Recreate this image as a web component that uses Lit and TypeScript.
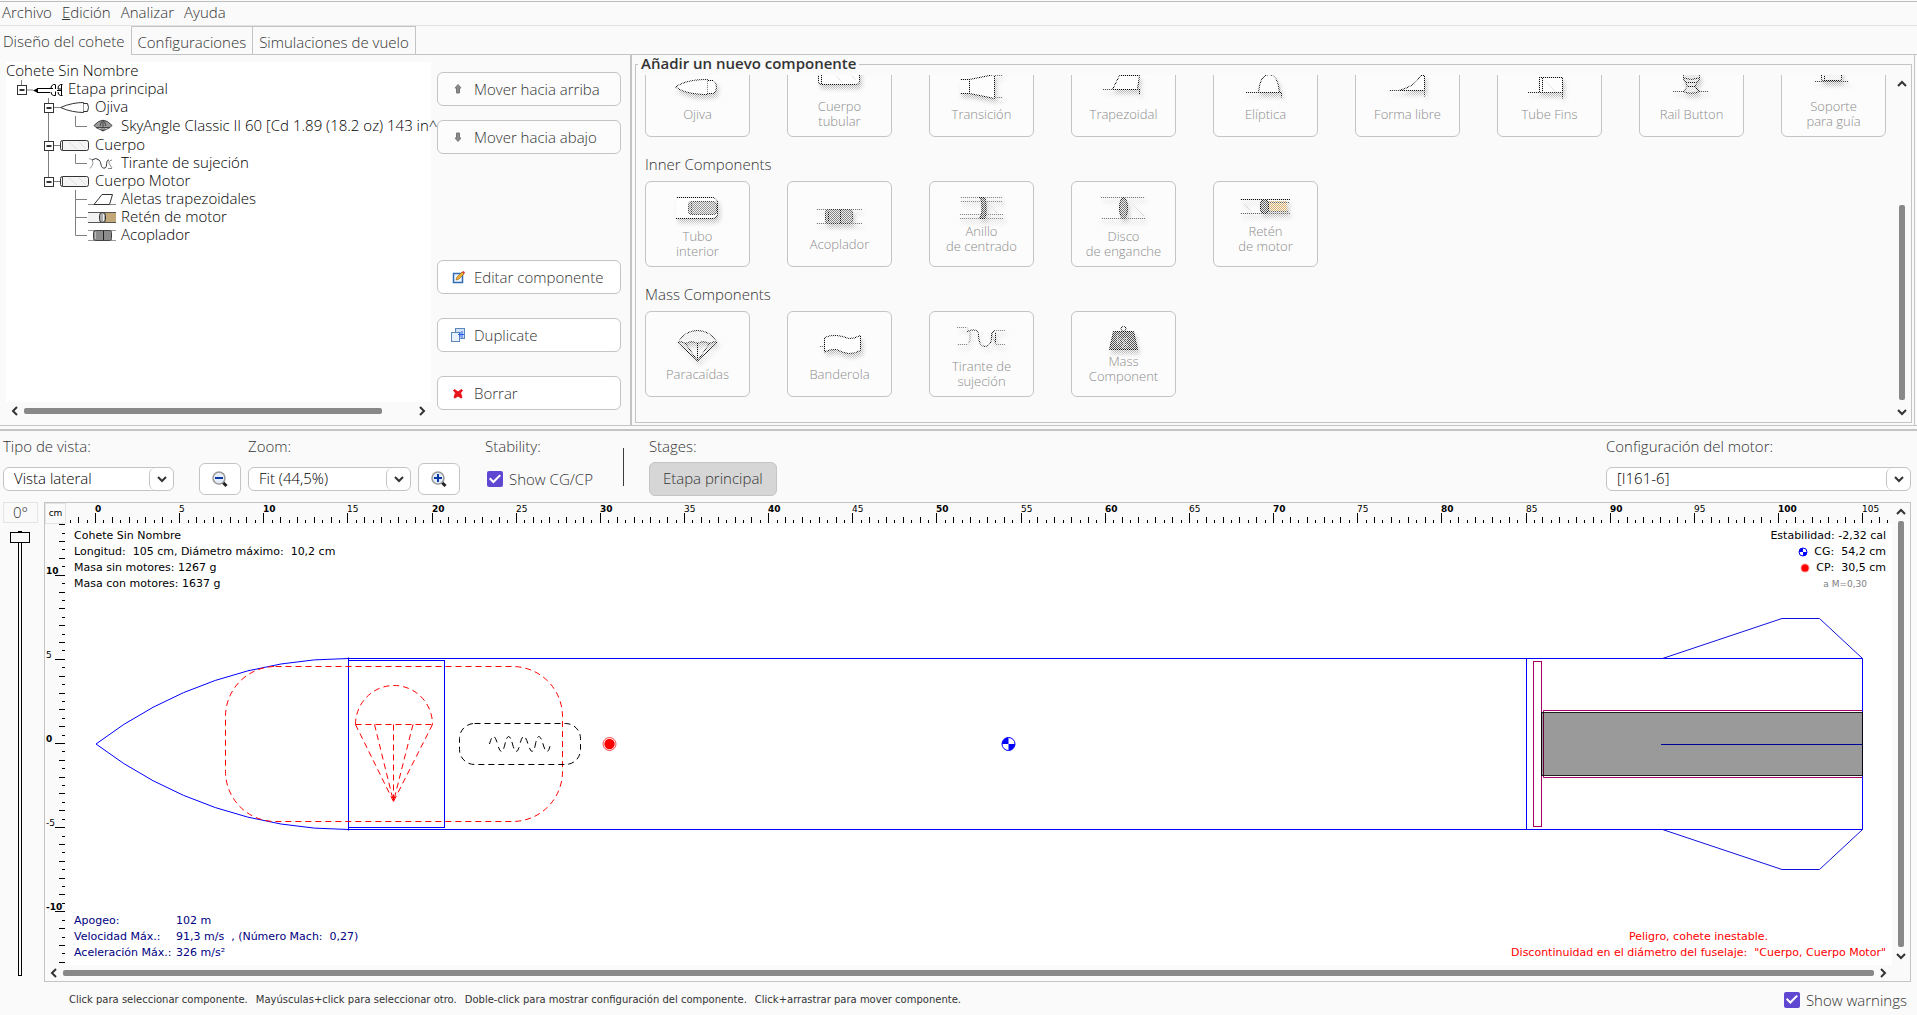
import { LitElement, html, svg, css, nothing, TemplateResult, SVGTemplateResult } from "lit";
import { customElement } from "lit/decorators.js";

type Shape = SVGTemplateResult;

interface TreeRow {
  label: string;
  depth: number;
  guides: string;
  box?: boolean;
  icon?: Shape;
  iconWidth?: number;
  tall?: boolean;
}

interface Part {
  lines: string[];
  icon: Shape;
  size: "one" | "two" | "mid";
}

const K = "#111";

/* ---------- tree icons ---------- */

const tubeSmall = svg`
  <rect x=".5" y="4.5" width="28" height="10" rx="2" fill="#f4f4f4" stroke="#333"/>
  <path d="M2.500 5v9" stroke="#444"/><path d="M9 6l8 7M19 6l7 7" stroke="#ddd"/>`;

const noseSmall = svg`
  <path d="M.5 9.5C8 6 17 4.500 23.500 4.500V14.500C17 14.500 8 13 .5 9.500Z" fill="#fff" stroke="#333"/>
  <path d="M23.500 5.500h4q2 4 0 8h-4" fill="#fff" stroke="#333"/>`;

const rocketSmall = svg`
  <path d="M0 10.500l4-2h1v4h-1z" fill="#000"/>
  <path d="M4 8.500h16M4 12.500h13" stroke="#000"/>
  <path d="M22.500 4.500h-2q-3 1-2.500 4M18 12q0 3 2.500 3.500h2M22.500 5v4M22.500 11.500v4M29.500 4.500h-2q-3 1-2.500 4.500h3M25 12q0 3 2.500 3.500h2M28.500 5v10M24 10.500h5" fill="none" stroke="#000"/>`;

const chuteSmall = svg`
  <path d="M1 9.500Q10 -1 19 9.500L17 11.500H3Z" fill="#999" stroke="#444"/>
  <path d="M7 10Q10 -1 13 10M3 11.500L10 15L17 11.500M7 11l3 4l3-4M10 4v11" fill="none" stroke="#444"/>`;

const cordSmall = svg`
  <path d="M1 4.500q4 0 4 4q0 3-3 6" fill="none" stroke="#999"/>
  <path d="M4 6q4-3 7 0c3 3 1 9 6 8c3-1 0-8 4-8" fill="none" stroke="#333"/>
  <path d="M20 14.500h4M24 6q-5 1-2 5q2 3 2 3" fill="none" stroke="#888"/>`;

const finSmall = svg`
  <path d="M0 14.500h28" stroke="#888"/><path d="M6 14.500L14 4.500H24.500L21.500 14.500Z" fill="#fff" stroke="#333"/>`;

const blockSmall = svg`
  <rect x="0" y="5" width="28" height="10" fill="#f2f2f2"/>
  <rect x="16" y="5" width="12" height="10" fill="#c2a878"/>
  <path d="M0 4.500h28M0 14.500h28" stroke="#555"/>
  <rect x="11.500" y="4.500" width="6" height="10" rx="3" fill="#aaa" stroke="#333"/><path d="M15.500 6v7" stroke="#eee"/>`;

const couplerSmall = svg`
  <path d="M0 4.500h28M0 14.500h28" stroke="#999"/>
  <rect x="5.500" y="4.500" width="18" height="10" rx="2" fill="#8b8b8b" stroke="#444"/>
  <path d="M15.500 5v9" stroke="#222"/><path d="M7.500 6v7" stroke="#bbb"/>`;

const TREE: TreeRow[] = [
  { label: "Etapa principal", depth: 1, guides: "M15.500 0V5M21 10H27", box: true, icon: rocketSmall, iconWidth: 30 },
  { label: "Ojiva", depth: 2, guides: "M42.500 0V5M42.500 15V18M48 9.500H54", box: true, icon: noseSmall, iconWidth: 30 },
  { label: "SkyAngle Classic II 60 [Cd 1.89 (18.2 oz) 143 in^", depth: 3, guides: "M42.500 0V20M69.500 0V10.500H81", icon: chuteSmall, iconWidth: 20, tall: true },
  { label: "Cuerpo", depth: 2, guides: "M42.500 0V5M42.500 15V18M48 9.500H54", box: true, icon: tubeSmall, iconWidth: 30 },
  { label: "Tirante de sujeción", depth: 3, guides: "M42.500 0V18M69.500 0V9.500H81", icon: cordSmall, iconWidth: 28 },
  { label: "Cuerpo Motor", depth: 2, guides: "M42.500 0V5M48 9.500H54", box: true, icon: tubeSmall, iconWidth: 30 },
  { label: "Aletas trapezoidales", depth: 3, guides: "M69.500 0V18M69.500 9.500H81", icon: finSmall, iconWidth: 28 },
  { label: "Retén de motor", depth: 3, guides: "M69.500 0V18M69.500 9.500H81", icon: blockSmall, iconWidth: 28 },
  { label: "Acoplador", depth: 3, guides: "M69.500 0V9.500H81", icon: couplerSmall, iconWidth: 28 },
];

/* ---------- component palette ---------- */

const OUTER: Part[] = [
  { lines: ["Ojiva"], size: "one", icon: svg`
    <path d="M29.500 35C38 29 50 27.500 61.500 27.500V42.500C50 42.500 38 41 29.500 35Z" fill="#fff"/>
    <path d="M61.500 28.500h6q3 2 3 6.500t-3 6.500h-6" fill="#fff"/>` },
  { lines: ["Cuerpo", "tubular"], size: "two", icon: svg`
    <rect x="30.500" y="14.500" width="41" height="18" rx="3" fill="#fff"/><path d="M33.500 15v17"/><path d="M42 15l12 16M58 15l10 14" stroke="#ddd"/>` },
  { lines: ["Transición"], size: "one", icon: svg`
    <path d="M30 27.500H39.500L64.500 22.500V46.500L39.500 41.500H30" fill="#fff"/><path d="M39.500 27v15"/><path d="M64 23.500h9M64 45.500h9" stroke="#777"/>` },
  { lines: ["Trapezoidal"], size: "one", icon: svg`
    <path d="M31 37.500h36" stroke="#555"/><path d="M40.500 37.500L47.500 23.500H67.500L65.500 37.500Z" fill="#fff"/><path d="M67.500 37v6"/>` },
  { lines: ["Elíptica"], size: "one", icon: svg`
    <path d="M32 40.500h35.500v5" stroke="#222"/><path d="M44.500 40.500Q46 22.500 55 22.500T65.500 40.500Z" fill="#fff"/>` },
  { lines: ["Forma libre"], size: "one", icon: svg`
    <path d="M33 38.500h35.500v6" stroke="#444"/><path d="M43 38.500Q60 34 64.500 23.500H68.500V38.500Z" fill="#fff"/>` },
  { lines: ["Tube Fins"], size: "one", icon: svg`
    <rect x="41.500" y="25.500" width="23" height="15" fill="#fff"/><path d="M44.500 26v14"/><path d="M47 28l11 12" stroke="#ddd"/><path d="M30 40.500h34.500v6" stroke="#222"/>` },
  { lines: ["Rail Button"], size: "one", icon: svg`
    <path d="M33 39.500h36" stroke="#555"/>
    <path d="M45.500 30Q47 32 47 34.500Q46 37 43 39.500Q51 43 59.500 39.500Q56 37 55.500 34.500Q55.500 32 57.500 30Z" fill="#ddd"/>
    <rect x="43.500" y="20.500" width="16" height="10" rx="4" fill="#ddd"/><path d="M44 26q7 3 15 0M47 34.500h8.500"/>` },
  { lines: ["Soporte", "para guía"], size: "two", icon: svg`
    <path d="M33 29.500h34" stroke="#444"/><rect x="39.500" y="18.500" width="20" height="10" rx="2" fill="#eee"/><path d="M42.500 19v9"/>` },
];

const INNER: Part[] = [
  { lines: ["Tubo", "interior"], size: "two", icon: svg`
    <path d="M30 15.500H67q4.500 1 4.500 5V32q0 4-4.500 4.500H30" fill="#fff"/>
    <rect x="42.500" y="19.500" width="28" height="13" rx="3" fill="#999" stroke="#444"/><path d="M45.500 20v12" stroke="#444"/>` },
  { lines: ["Acoplador"], size: "one", icon: svg`
    <path d="M28 27.500h46M28 41.500h46" stroke="#777"/>
    <rect x="37.500" y="27.500" width="27" height="14" rx="3" fill="#888" stroke="#333"/><path d="M52.500 27v15M40.500 29v11"/>` },
  { lines: ["Anillo", "de centrado"], size: "mid", icon: svg`
    <path d="M30 15.500h43M30 19.500h43M30 32.500h43M30 36.500h43" stroke="#888"/>
    <path d="M49 15.500h5.500q1.500 2 1.500 10.500t-1.500 10.500h-5.500q3-1 3-10.500t-3-10.500z" fill="#666"/><path d="M58 20l9 11" stroke="#ccc"/>` },
  { lines: ["Disco", "de enganche"], size: "two", icon: svg`
    <path d="M29 15.500h44M29 36.500h44" stroke="#777"/><ellipse cx="51.500" cy="26" rx="4" ry="10.500" fill="#777"/><path d="M58 19l14 15" stroke="#ccc"/>` },
  { lines: ["Retén", "de motor"], size: "mid", icon: svg`
    <rect x="50" y="19" width="23" height="11" fill="#d8b070" stroke="none"/>
    <path d="M26 17.500h50" /><path d="M52 20.500h23M52 29.500h23M26 31.500h50" stroke="#666"/><path d="M29 20l8 10" stroke="#ccc"/>
    <rect x="46.500" y="17.500" width="8" height="14" rx="4" fill="#666"/>` },
];

const MASS: Part[] = [
  { lines: ["Paracaídas"], size: "one", icon: svg`
    <path d="M32 30.500Q39 18.500 51.500 18.500T71 30.500Q68 28.500 63.500 31.500Q57 28 51.500 31.500Q46 28 39.500 31.500Q35 28.500 32 30.500Z" fill="#eee"/>
    <path d="M32 30.500L51.500 49L71 30.500M39.500 31.500L51.500 49L63.500 31.500M51.500 31V49" fill="none"/>` },
  { lines: ["Banderola"], size: "one", icon: svg`
    <path d="M36.500 25.500Q42 23 48.500 23.500T60.500 26.500Q66 27 72.500 23.500V38.500Q66 42 60.500 41.500T48.500 37.500Q42 37 36.500 40Z" fill="#fff"/><path d="M31 34.500h5" stroke="#777"/>` },
  { lines: ["Tirante de", "sujeción"], size: "two", icon: svg`
    <path d="M27 15.500h10l3 5v8l-2 4H27" fill="none" stroke="#888"/><path d="M75 18.500H64q-3 3-1 7l3 7h9" fill="none" stroke="#888"/>
    <path d="M37 20Q40 17.500 43.500 18Q49 18 48.500 24Q49 34.500 55 34.500Q62 34 61.500 24Q61 20 65 19M65.500 20v11" fill="none"/>` },
  { lines: ["Mass", "Component"], size: "mid", icon: svg`
    <circle cx="51.500" cy="17" r="2.500" fill="none"/><path d="M41.500 19.500H61.500L65.500 37.500H37.500Z" fill="#555"/>
    <text x="44" y="33" font-size="12" fill="#ccc" stroke="none">kg</text>` },
];

/* ---------- scrollbar ---------- */

@customElement("scroll-bar")
export class ScrollBar extends LitElement {
  static properties = {
    vertical: { type: Boolean, reflect: true },
    start: { type: Number },
    span: { type: Number },
  };
  declare vertical: boolean;
  declare start: number;
  declare span: number;

  constructor() {
    super();
    this.vertical = false;
    this.start = 0;
    this.span = 100;
  }

  static styles = css`
    :host { display: flex; align-items: center; height: 18px; }
    :host([vertical]) { flex-direction: column; width: 18px; height: auto; }
    button { flex: none; display: grid; place-items: center; width: 18px; height: 18px; padding: 0; border: 0; background: none; }
    .track { flex: 1; display: flex; width: 100%; height: 6px; }
    :host([vertical]) .track { flex-direction: column; width: 6px; height: auto; }
    .thumb { background: #888; border-radius: 2px; }
    path { fill: none; stroke: #333; stroke-width: 2; }
  `;

  render() {
    const size = (v: number) => (this.vertical ? `height:${v}%` : `width:${v}%`);
    return html`
      <button aria-label="Anterior"><svg width="12" height="12"><path d=${this.vertical ? "M2 8l4-4l4 4" : "M8 2l-4 4l4 4"}></path></svg></button>
      <div class="track"><div style=${size(this.start)}></div><div class="thumb" style=${size(this.span)}></div></div>
      <button aria-label="Siguiente"><svg width="12" height="12"><path d=${this.vertical ? "M2 4l4 4l4-4" : "M4 2l4 4l-4 4"}></path></svg></button>
    `;
  }
}

/* ---------- application ---------- */

const CM = 16.83;

@customElement("app-root")
export class AppRoot extends LitElement {
  static styles = css`
    * { box-sizing: border-box; }
    :host {
      display: flex; flex-direction: column; min-height: 100vh;
      background: #fafafa; color: #333;
      font: 300 15px/18px "Open Sans", "Noto Sans", sans-serif;
      --line: #c4c4c4;
    }
    button, select, input { font: inherit; color: inherit; margin: 0; }
    .defs { position: absolute; }
    .menu { display: flex; gap: 10px; height: 25px; margin-top: 1px; padding: 0 2px 4px; align-items: center; border-top: 1px solid #bdbdbd; border-bottom: 1px solid #e2e2e2; }
    .menu button { border: 0; background: none; padding: 0; }
    .tabs { display: flex; height: 29px; }
    .tabs button { background: none; border: 1px solid var(--line); border-left-width: 0; padding: 2px 6px 0; }
    .tabs button:first-child { border-width: 0 1px 0 0; padding: 0 6px 0 3px; }
    .tabs .rest { flex: 1; border-bottom: 1px solid var(--line); }

    .upper { display: flex; height: 371px; border-bottom: 1px solid var(--line); }
    .design { flex: none; width: 630px; display: flex; gap: 6px; padding: 7px 9px 5px 6px; }
    .treepane { flex: 1; min-width: 0; display: flex; flex-direction: column; }
    .tree { flex: 1; background: #fff; color: #000; margin: 0; padding: 0; list-style: none; white-space: nowrap; }
    .row { display: flex; height: 18px; align-items: center; }
    .row.tall { height: 20px; }
    .row svg { flex: none; }
    .row .ic { margin-right: 5px; }
    .row.tall .ic { margin: 0 8px 0 5px; }
    .row span { padding-bottom: 3px; }
    .actions { flex: none; width: 184px; display: flex; flex-direction: column; padding-top: 10px; }
    .action { flex: none; display: flex; align-items: center; gap: 8px; height: 34px; margin-bottom: 14px; padding: 0 12px; background: #fff; border: 1px solid var(--line); border-radius: 6px; white-space: nowrap; }
    .action:disabled { background: #fcfcfc; color: #333; }
    .action.gap { margin-top: 92px; }
    .action.edit { margin-bottom: 24px; }

    .adder { flex: 1; min-width: 0; border-left: 2px solid var(--line); border-right: 1px solid var(--line); padding: 0 2px 2px 3px; margin-right: 2px; display: flex; }
    fieldset { flex: 1; min-width: 0; margin: 0; padding: 2px 0 0 9px; border: 1px solid var(--line); display: flex; }
    legend { font-weight: 600; line-height: 16px; padding: 0 3px 2px; margin-left: -7px; }
    .frame { flex: 1; display: flex; min-width: 0; height: 346px; }
    .palette { flex: 1; min-width: 0; height: 346px; overflow: hidden; display: flex; flex-direction: column; justify-content: flex-end; padding-bottom: 24px; }
    .palette h3 { flex: none; margin: 18px 0 8px; font: inherit; height: 18px; }
    .cards { flex: none; display: flex; gap: 37px; }
    .card { flex: none; width: 105px; height: 86px; padding: 0; display: flex; flex-direction: column; justify-content: flex-start; border: 1px solid var(--line); border-radius: 6px; background: #fcfcfc; color: #8c8c8c; font-size: 13px; line-height: 15px; text-align: center; }
    .card svg { display: block; overflow: visible; width: 103px; }
    .card svg.one { height: 55px; } .card svg.two { height: 47px; } .card svg.mid { height: 42px; }
    .card span { display: block; width: 100%; white-space: nowrap; }

    .toolbar { display: flex; height: 73px; margin-top: 3px; border-top: 2px solid var(--line); padding: 5px 6px 0 3px; align-items: flex-start; white-space: nowrap; }
    .group { display: flex; flex: none; flex-direction: column; gap: 6px; }
    .group > .title { height: 20px; line-height: 20px; }
    .line { display: flex; align-items: center; height: 34px; gap: 7px; }
    .combo { position: relative; display: flex; height: 24px; background: #fff; border: 1px solid var(--line); border-radius: 6px; }
    .combo select { appearance: none; border: 0; background: none; color: #000; width: 100%; padding: 0 30px 2px 10px; outline: none; }
    .combo svg { position: absolute; right: 0; top: 0; width: 24px; height: 22px; border-left: 1px solid var(--line); border-radius: 6px; pointer-events: none; }
    .w1 { width: 171px; } .w2 { width: 163px; } .w3 { width: 305px; }
    .out { margin: 0 7px 0 25px; }
    .stab { margin: 0 30px 0 25px; }
    .zoom { width: 42px; height: 32px; display: grid; place-items: center; padding: 0; background: #fff; border: 1px solid var(--line); border-radius: 6px; }
    .check { display: flex; align-items: center; gap: 6px; white-space: nowrap; }
    .check input { flex: none; appearance: none; width: 16px; height: 16px; background: #5f47d1; border-radius: 2px; display: grid; place-items: center; }
    .check input::before { content: ""; width: 12px; height: 10px; background: #fff; clip-path: polygon(0 50%, 12% 36%, 36% 64%, 88% 5%, 100% 18%, 37% 95%); }
    .stab .check { padding-left: 2px; }
    .sep { width: 1px; height: 38px; background: #3c3c3c; margin: 12px 25px 0 0; }
    .stage { height: 34px; padding: 0 13px 2px; background: #d6d6d6; border: 1px solid var(--line); border-radius: 6px; }
    .grow { flex: 1; }

    .view { flex: 1; display: flex; gap: 6px; padding: 0 6px 0 3px; min-height: 300px; }
    .rotate { flex: none; width: 35px; display: flex; flex-direction: column; align-items: center; gap: 8px; padding-bottom: 6px; }
    .angle { width: 35px; height: 21px; border: 1px solid #e4e4e4; text-align: center; line-height: 18px; }
    .rotate input { appearance: none; writing-mode: vertical-lr; flex: 1; width: 20px; min-height: 0; background: none; margin-right: 1px; }
    .rotate input::-webkit-slider-runnable-track { width: 4px; background: #fafafa; border: 1px solid #000; }
    .rotate input::-webkit-slider-thumb { appearance: none; width: 20px; height: 11px; margin-left: -9px; border: 1px solid #000; background: #fafafa; }
    .sheet { flex: 1; min-width: 0; border: 1px solid var(--line); display: grid; grid-template: 21px minmax(0, 1fr) 16px / 21px minmax(0, 1fr) 18px; }
    .unit { font: 400 9px/18px "DejaVu Sans", sans-serif; border: 1px solid #e4e4e4; text-align: center; color: #000; }
    .sheet svg { display: block; width: 100%; height: 100%; overflow: hidden; }
    .ruler { font: 400 9px "DejaVu Sans", sans-serif; }
    .ruler .b { font-weight: 700; }
    .tick { stroke: #000; fill: none; shape-rendering: crispEdges; }
    .sheet .vbar { grid-area: 1 / 3 / 3 / 4; }
    .sheet .hbar { grid-area: 3 / 1 / 4 / 3; height: 16px; }
    .canvas { position: relative; background: #fff; font: 400 11px/16px "DejaVu Sans", sans-serif; color: #000; overflow: hidden; }
    .info { position: absolute; }
    .info div, .info span { white-space: pre; }
    .tl { left: 8px; top: 4px; }
    .tr { right: 6px; top: 4px; text-align: right; }
    .tr .mark { display: flex; justify-content: flex-end; align-items: center; gap: 6px; }
    .canvas .tr svg { width: 10px; height: 10px; }
    .tr .mach { color: #808080; font-size: 9px; padding-right: 19px; }
    .bl { left: 8px; bottom: 4px; color: #000080; display: grid; grid-template-columns: 102px auto; }
    .br { right: 6px; bottom: 4px; color: #f00; text-align: center; }

    .footer { flex: none; display: flex; align-items: center; height: 33px; padding: 2px 10px 0 69px; }
    .hints { display: flex; gap: 8px; font: 400 10px/14px "DejaVu Sans", sans-serif; }
    .hints span { white-space: nowrap; }
  `;

  private card(p: Part): TemplateResult {
    return html`<button class="card" disabled>
      <svg class=${p.size} aria-hidden="true"><g mask="url(#dither)"><g filter="url(#soft)" stroke=${K} fill="none">${p.icon}</g></g></svg>
      ${p.lines.map((l) => html`<span>${l}</span>`)}
    </button>`;
  }

  private row(r: TreeRow): TemplateResult {
    const w = [0, 27, 54, 82][r.depth];
    const bx = r.depth === 1 ? 11.5 : 38.5;
    const h = r.tall ? 20 : 18;
    return html`<li class="row d${r.depth} ${r.tall ? "tall" : ""}">
      <svg width=${w} height=${h}>
        <path d=${r.guides} fill="none" stroke="#808080"></path>
        ${r.box
          ? svg`<rect x=${bx} y="5.5" width="9" height="9" fill="#fff" stroke="#333"/><path d="M${bx + 2} 10h5" stroke="#333" stroke-width="2"/>`
          : nothing}
      </svg>
      <svg class="ic" width=${r.iconWidth ?? 28} height=${h}>${r.icon}</svg>
      <span>${r.label}</span>
    </li>`;
  }

  private topRuler() {
    const out: Shape[] = [];
    for (let i = -3; i <= 213; i++) {
      const x = Math.round(29 + (i * CM) / 2) + 0.5;
      const top = i % 10 === 0 ? 10 : i % 2 === 0 ? 14 : 17;
      out.push(svg`<path class="tick" d="M${x} ${top}V20"/>`);
      if (i % 10 === 0) out.push(svg`<text class=${i % 20 === 0 ? "b" : ""} x=${x - 0.5} y="9">${i / 2}</text>`);
    }
    return out;
  }

  private sideRuler() {
    const out: Shape[] = [];
    for (let i = -26; i <= 26; i++) {
      const y = Math.round(219 + (i * CM) / 2) + 0.5;
      const left = i % 10 === 0 ? 10 : i % 2 === 0 ? 14 : 17;
      out.push(svg`<path class="tick" d="M${left} ${y}H20"/>`);
      if (i % 10 === 0) out.push(svg`<text class=${i % 20 === 0 ? "b" : ""} x="1" y=${y - 1.5}>${-i / 2}</text>`);
    }
    return out;
  }

  private rocket() {
    return svg`<g transform="translate(30 220)" fill="none">
      <g stroke="#00f">
        <path d="M252.500 -85.500A415.600 415.600 0 0 0 0 0A415.600 415.600 0 0 0 252.500 85.500"/>
        <path d="M252.500 -86.500V86.500M252.500 -85.500H1766.500V85.500H252.500M1430.500 -85.500V85.500"/>
        <rect x="252.500" y="-83.500" width="96" height="167"/>
      </g>
      <path d="M1566.500 -85.500L1686 -125.500H1723.500L1766.500 -85.500M1566.500 85.500L1686 125.500H1723.500L1766.500 85.500" stroke="#11d"/>
      <path d="M1565 .5H1766" stroke="#00f"/>
      <g stroke="#a80064">
        <rect x="1437.500" y="-82.500" width="8" height="165"/>
        <path d="M1766.500 -33.500H1447.500V33.500H1766.500"/>
      </g>
      <rect x="1445.500" y="-31.500" width="321" height="63" fill="#000" fill-opacity=".395" stroke="#000" stroke-opacity=".85"/>
      <g stroke="#f00" stroke-dasharray="6 4">
        <rect x="129.500" y="-77.500" width="337" height="155" rx="50"/>
        <path d="M259.500 -19.500A38.500 39 0 0 1 336.500 -19.500"/>
        <path d="M259.500 -19.500H336.500"/>
        <path d="M259.500 -19.500L297.500 57.500"/><path d="M278.500 -19.500L297.500 57.500"/><path d="M297.500 -19.500V57.500"/>
        <path d="M317 -19.500L297.500 57.500"/><path d="M336.500 -19.500L297.500 57.500"/>
      </g>
      <g stroke="#000" stroke-dasharray="6 4">
        <rect x="363.500" y="-20.500" width="121" height="41" rx="15"/>
        <path d="M393.500 0Q397.500 -15 401.500 0T409 0T416.500 0T424 0T432 0T439.500 0T447 0T454.500 0"/>
      </g>
      <circle cx="513.500" r="6.500" stroke="#f00" stroke-opacity=".7"/><circle cx="513.500" r="5.200" fill="#f00"/>
      <g transform="translate(912.500 0)">${this.cg(6.5)}</g>
    </g>`;
  }

  private cg(r: number) {
    return svg`<circle r=${r} fill="#fff" stroke="#00f"/><path d="M0 0V${-r}A${r} ${r} 0 0 0 ${-r} 0ZM0 0V${r}A${r} ${r} 0 0 0 ${r} 0Z" fill="#00f"/>`;
  }

  private combo(id: string, cls: string, value: string) {
    return html`<div class="combo ${cls}">
      <select id=${id}><option>${value}</option></select>
      <svg aria-hidden="true"><path d="M8 9l4 4l4-4" fill="none" stroke="#333" stroke-width="2"></path></svg>
    </div>`;
  }

  private lens(plus: boolean) {
    return html`<svg width="18" height="18" aria-hidden="true">
      <path d="M11.500 12l4 4" stroke="#222" stroke-width="3"></path>
      <circle cx="8" cy="8" r="6" fill="#e4edf8" stroke="#999" stroke-width="1.500"></circle>
      <path d=${plus ? "M4 8h8M8 4v8" : "M4 8h8"} stroke="#0a37a8" stroke-width="2"></path>
    </svg>`;
  }

  render() {
    return html`
      <svg class="defs" width="0" height="0" aria-hidden="true">
        <defs>
          <pattern id="checker" width="2" height="2" patternUnits="userSpaceOnUse">
            <path d="M0 0h1v1h-1zM1 1h1v1h-1z" fill="#fff" shape-rendering="crispEdges"></path>
          </pattern>
          <mask id="dither" maskUnits="userSpaceOnUse" x="0" y="0" width="103" height="60">
            <rect width="103" height="60" fill="#222"></rect>
            <rect width="103" height="60" fill="url(#checker)"></rect>
          </mask>
          <filter id="soft" filterUnits="userSpaceOnUse" x="0" y="0" width="103" height="60">
            <feDropShadow dx="2" dy="4" stdDeviation="2" flood-color="#000" flood-opacity=".3"></feDropShadow>
          </filter>
        </defs>
      </svg>

      <nav class="menu">
        <button>Archivo</button><button><u>E</u>dición</button><button>Analizar</button><button>Ayuda</button>
      </nav>
      <div class="tabs" role="tablist">
        <button role="tab" aria-selected="true">Diseño del cohete</button><button role="tab">Configuraciones</button><button role="tab">Simulaciones de vuelo</button>
        <div class="rest"></div>
      </div>

      <section class="upper">
        <div class="design">
          <div class="treepane">
            <ul class="tree">
              <li class="row"><span>Cohete Sin Nombre</span></li>
              ${TREE.map((r) => this.row(r))}
            </ul>
            <scroll-bar .span=${92}></scroll-bar>
          </div>
          <div class="actions">
            <button class="action" disabled><svg width="16" height="16"><path d="M8 3.500l3 3.500h-1.500v5h-3v-5h-1.500z" fill="#8a8a8a" stroke="#777"></path></svg>Mover hacia arriba</button>
            <button class="action" disabled><svg width="16" height="16"><path d="M8 12.500l3-3.500h-1.500v-5h-3v5h-1.500z" fill="#8a8a8a" stroke="#777"></path></svg>Mover hacia abajo</button>
            <button class="action gap edit"><svg width="16" height="16"><rect x="3.500" y="4.500" width="9" height="9" fill="#eef4fb" stroke="#2f6db5" stroke-width="1.500"></rect><path d="M6 11l1-3l5-5l2 2l-5 5z" fill="#f0b030" stroke="#8a5a10" stroke-width=".6"></path><path d="M12 3l2 2l1-1.500l-1.500-1.500z" fill="#d33"></path></svg>Editar componente</button>
            <button class="action edit"><svg width="16" height="16"><rect x="5.500" y="1.500" width="9" height="10" fill="#cfe0f7" stroke="#5b87b8"></rect><rect x="1.500" y="5.500" width="8" height="9" fill="#e8f1fd" stroke="#5b87b8"></rect><path d="M8 7.500h6M12 4v7M10 5v5" stroke="#2f63e8"></path></svg>Duplicate</button>
            <button class="action"><svg width="16" height="16"><path d="M4.500 4.500L8 7l3.500-2.500l1 1L10.500 8l1.500 4.500l-1 .5L8 11l-3 2l-1-.5L5.500 8l-2-2.500z" fill="#e8141c" stroke="#e8141c"></path></svg>Borrar</button>
          </div>
        </div>
        <div class="adder">
          <fieldset>
            <legend>Añadir un nuevo componente</legend>
            <div class="frame">
              <div class="palette">
                <div class="cards">${OUTER.map((p) => this.card(p))}</div>
                <h3>Inner Components</h3>
                <div class="cards">${INNER.map((p) => this.card(p))}</div>
                <h3>Mass Components</h3>
                <div class="cards">${MASS.map((p) => this.card(p))}</div>
              </div>
              <scroll-bar vertical .start=${36} .span=${63}></scroll-bar>
            </div>
          </fieldset>
        </div>
      </section>

      <section class="toolbar">
        <div class="group"><label class="title" for="view">Tipo de vista:</label><div class="line">${this.combo("view", "w1", "Vista lateral")}</div></div>
        <div class="group out"><span class="title"></span><div class="line"><button class="zoom" aria-label="Alejar">${this.lens(false)}</button></div></div>
        <div class="group"><label class="title" for="zoom">Zoom:</label><div class="line">${this.combo("zoom", "w2", "Fit (44,5%)")}<button class="zoom" aria-label="Acercar">${this.lens(true)}</button></div></div>
        <div class="group stab"><span class="title">Stability:</span><div class="line"><label class="check"><input type="checkbox" checked />Show CG/CP</label></div></div>
        <div class="sep"></div>
        <div class="group"><span class="title">Stages:</span><button class="stage">Etapa principal</button></div>
        <div class="grow"></div>
        <div class="group"><label class="title" for="motor">Configuración del motor:</label><div class="line">${this.combo("motor", "w3", "[I161-6]")}</div></div>
      </section>

      <section class="view">
        <div class="rotate"><div class="angle">0°</div><input type="range" min="0" max="360" value="0" aria-label="Rotación" /></div>
        <div class="sheet">
          <div class="unit">cm</div>
          <div class="ruler"><svg>${this.topRuler()}</svg></div>
          <scroll-bar class="vbar" vertical></scroll-bar>
          <div class="ruler"><svg>${this.sideRuler()}</svg></div>
          <div class="canvas">
            <svg>${this.rocket()}</svg>
            <div class="info tl"><div>Cohete Sin Nombre</div><div>Longitud:  105 cm, Diámetro máximo:  10,2 cm</div><div>Masa sin motores: 1267 g</div><div>Masa con motores: 1637 g</div></div>
            <div class="info tr"><div>Estabilidad: -2,32 cal</div><div class="mark"><svg viewBox="-5 -5 10 10">${this.cg(4)}</svg><span>CG:  54,2 cm</span></div><div class="mark"><svg viewBox="-5 -5 10 10"><circle r="4.500" fill="#f99"></circle><circle r="3.500" fill="#f00"></circle></svg><span>CP:  30,5 cm</span></div><div class="mach">a M=0,30</div></div>
            <div class="info bl"><span>Apogeo:</span><span>102 m</span><span>Velocidad Máx.:</span><span>91,3 m/s  , (Número Mach:  0,27)</span><span>Aceleración Máx.:</span><span>326 m/s²</span></div>
            <div class="info br"><div>Peligro, cohete inestable.</div><div>Discontinuidad en el diámetro del fuselaje:  "Cuerpo, Cuerpo Motor"</div></div>
          </div>
          <scroll-bar class="hbar"></scroll-bar>
        </div>
      </section>

      <footer class="footer">
        <div class="hints"><span>Click para seleccionar componente.</span><span>Mayúsculas+click para seleccionar otro.</span><span>Doble-click para mostrar configuración del componente.</span><span>Click+arrastrar para mover componente.</span></div>
        <div class="grow"></div>
        <label class="check"><input type="checkbox" checked />Show warnings</label>
      </footer>
    `;
  }
}
